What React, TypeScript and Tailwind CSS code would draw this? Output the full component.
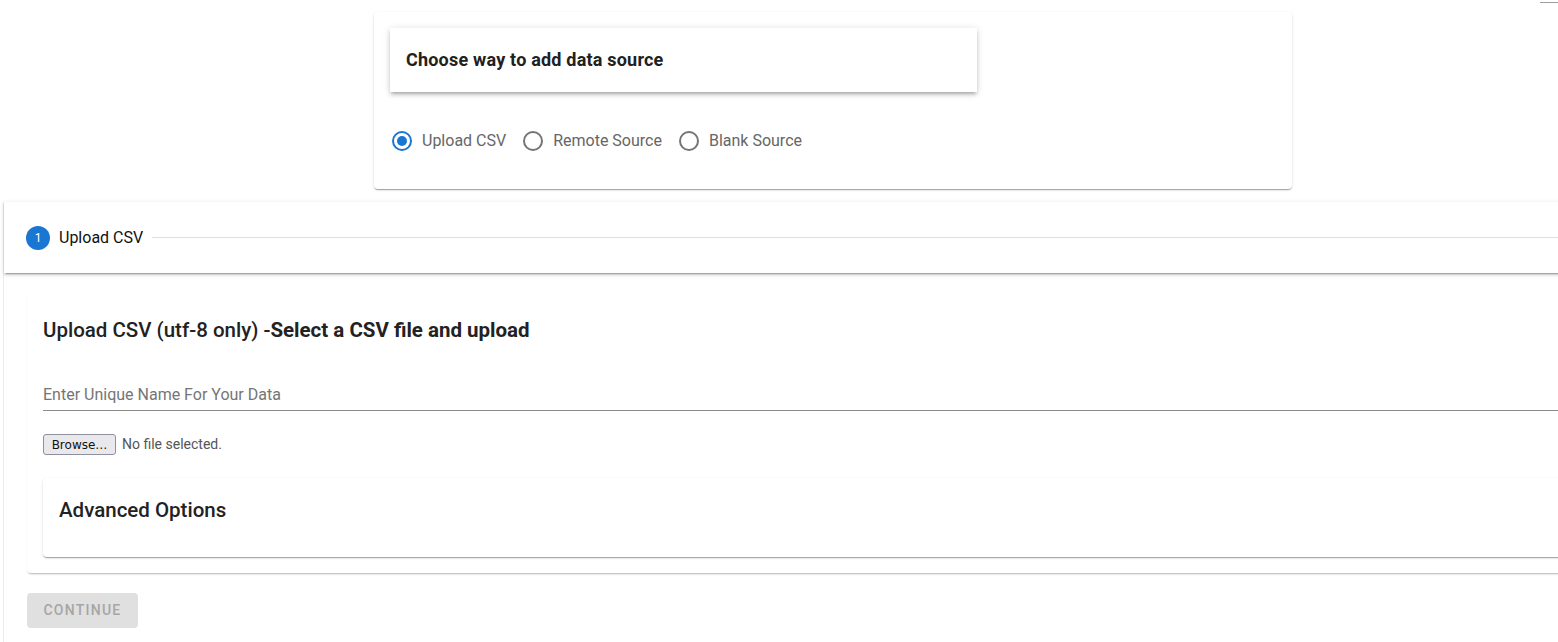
import React from "react";

function Radio({ checked, label }: { checked?: boolean; label: string }) {
  return (
    <label className="flex items-center gap-[10px]">
      <span
        className={
          "flex h-[20px] w-[20px] items-center justify-center rounded-full border-2 " +
          (checked ? "border-[#1976d2]" : "border-[#757575]")
        }
      >
        {checked && <span className="h-[10px] w-[10px] rounded-full bg-[#1976d2]" />}
      </span>
      <span className="text-[16px] leading-[24px] text-[#666666]">{label}</span>
    </label>
  );
}

export default function App() {
  return (
    <div className="relative h-[642px] w-full overflow-hidden bg-white font-[Roboto,sans-serif]">
      <div className="absolute right-0 top-[2px] h-[1px] w-[18px] bg-[#9e9e9e]" />
      <div className="w-[1666px] pt-[12px]">
        {/* Top card */}
        <div className="mx-auto h-[177px] w-[918px] rounded-[4px] bg-white p-[16px] shadow-[0_2px_1px_-1px_rgba(0,0,0,0.2),0_1px_1px_0_rgba(0,0,0,0.14),0_1px_3px_0_rgba(0,0,0,0.12)]">
          <div className="flex h-[64px] w-[587px] items-center bg-white px-[16px] pb-[2px] shadow-[0_3px_3px_-2px_rgba(0,0,0,0.2),0_3px_4px_0_rgba(0,0,0,0.14),0_1px_8px_0_rgba(0,0,0,0.12)]">
            <span className="text-[18px] font-bold tracking-[0.2px] text-[#212121]">Choose way to add data source</span>
          </div>
          <div className="mt-[37px] flex items-center gap-[17px] pl-[2px]">
            <Radio checked label="Upload CSV" />
            <Radio label="Remote Source" />
            <Radio label="Blank Source" />
          </div>
        </div>

        {/* Main area */}
        <div className="ml-[3px] mt-[13px] h-[440px] border-l border-[#ececec]">
          <div className="flex h-[71px] items-center bg-white pl-[22px] shadow-[0_3px_1px_-2px_rgba(0,0,0,0.2),0_2px_2px_0_rgba(0,0,0,0.14),0_1px_5px_0_rgba(0,0,0,0.12)]">
            <span className="flex h-[24px] w-[24px] items-center justify-center rounded-full bg-[#1976d2] text-[12px] text-white">
              1
            </span>
            <span className="ml-[9px] text-[16px] text-[#111]">Upload CSV</span>
            <span className="ml-[9px] h-[1px] flex-1 bg-[#dedede]" />
          </div>

          <div className="ml-[23px] mt-[16px] rounded-b-[4px] bg-white px-[16px] pb-[16px] pt-[27px] shadow-[0_2px_2px_-1px_rgba(0,0,0,0.3)]">
            <h2 className="text-[20.5px] font-medium leading-[28px] text-[#222]">
              Upload CSV (utf-8 only) -<span className="font-bold">Select a CSV file and upload</span>
            </h2>
            <div className="mt-[35px] flex h-[32px] items-center border-b border-[#8a8a8a]">
              <span className="text-[16px] text-[#757575]">Enter Unique Name For Your Data</span>
            </div>
            <div className="mt-[23px] flex items-center">
              <span className="flex h-[21px] w-[73px] items-center justify-center rounded-[3px] border border-[#8f8f9d] bg-[#e9e9ed] font-['DejaVu_Sans',sans-serif] text-[12px] text-[#111]">
                Browse…
              </span>
              <span className="ml-[6px] text-[14px] text-[#555]">No file selected.</span>
            </div>
            <div className="mt-[23px] h-[79px] rounded-[4px] bg-white px-[16px] pt-[20px] shadow-[0_2px_1px_-1px_rgba(0,0,0,0.2),0_1px_1px_0_rgba(0,0,0,0.14),0_1px_3px_0_rgba(0,0,0,0.12)]">
              <span className="text-[20.5px] font-medium leading-[24px] text-[#222]">Advanced Options</span>
            </div>
          </div>

          <div className="ml-[23px] mt-[20px]">
            <button className="flex h-[35px] w-[111px] items-center justify-center rounded-[4px] bg-[#e0e0e0] text-[14px] font-medium tracking-[1.25px] text-[#a6a6a6]">
              CONTINUE
            </button>
          </div>
        </div>
      </div>
    </div>
  );
}
